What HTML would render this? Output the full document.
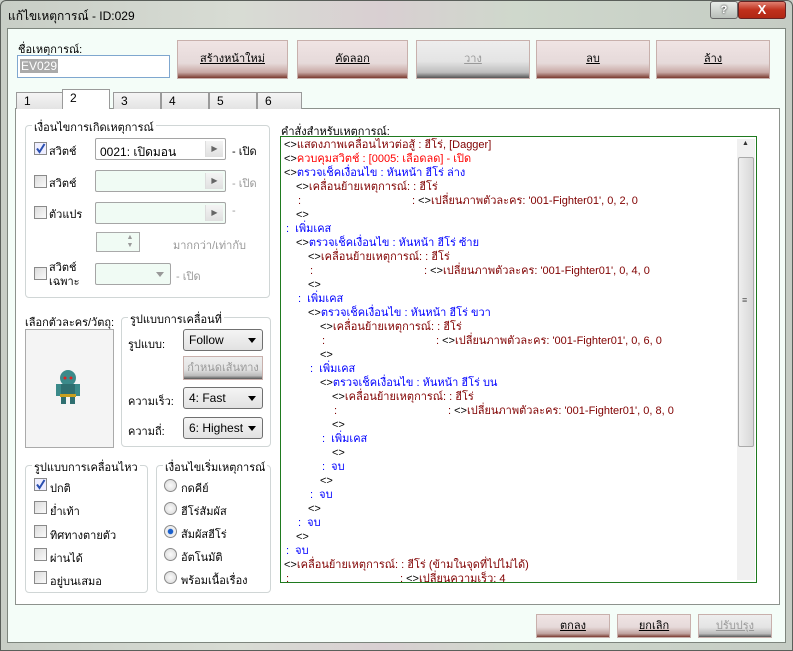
<!DOCTYPE html>
<html><head><meta charset="utf-8"><style>
*{box-sizing:border-box;margin:0;padding:0}
body{width:793px;height:651px;overflow:hidden;background:#c9cfc8;font-family:"Liberation Sans","DejaVu Sans",sans-serif;font-size:11px;color:#000;position:relative}
.a{position:absolute;white-space:nowrap}
.frame{position:absolute;left:0;top:0;width:793px;height:651px;background:linear-gradient(90deg,#c8cec6,#d8dcd4 30%,#d9cfd2 48%,#cfd8cc 65%,#c5ccc4);border:1px solid #5a5f5a;border-radius:6px 6px 0 0}
.client{position:absolute;left:7px;top:28px;width:779px;height:615px;background:#f4fdf8;border:1px solid #7d857d}
.btn{position:absolute;height:39px;background:linear-gradient(#f0e4e4 0%,#e8dcdc 45%,#e6dada 60%,#c8a8a4 85%,#7a3a30 100%);border:1px solid #c8b0ac;text-align:center;line-height:36px;font-size:11px;text-decoration:underline}
.btn.dis{background:linear-gradient(#eee 0%,#e4e4e4 55%,#bdbdbd 85%,#555 100%);color:#999}
.sbtn{position:absolute;height:24px;background:linear-gradient(#f0e4e4,#e6dada 55%,#bfa29e 85%,#7a3a30);border:1px solid #c8b0ac;text-align:center;line-height:22px;text-decoration:underline}
.sbtn.dis{background:linear-gradient(#eee,#e4e4e4 55%,#bbb 85%,#555);color:#999}
.tab{position:absolute;top:92px;height:17px;width:48px;background:linear-gradient(#f5f5f5,#e3e3e3);border:1px solid #9a9a9a;border-bottom:none;padding-left:7px;line-height:16px;font-size:12px}
.panel{position:absolute;left:15px;top:108px;width:765px;height:497px;background:#fff;border:1px solid #8d928d}
.grp{position:absolute;border:1px solid #d0d6d6;border-radius:4px}
.gl{position:absolute;background:#fff;padding:0 2px;top:-8px;left:6px}
.cb{position:absolute;width:13px;height:13px;border:1px solid #8a8a8a;background:linear-gradient(135deg,#dcdcdc,#fafafa)}
.rb{position:absolute;width:13px;height:13px;border:1px solid #8a8a8a;border-radius:50%;background:radial-gradient(#fafafa,#d8d8d8)}
.combo{position:absolute;height:22px;border:1px solid #a5a5a5;border-radius:2px;background:#f0fbf4}
.combo.on{background:#fff}
.arr{position:absolute;right:2px;top:2px;width:18px;height:16px;background:linear-gradient(#f4f4f4,#e0e0e0);border-left:1px solid #ddd;font-size:8px;text-align:center;line-height:16px;color:#666}
.dd{position:absolute;height:22px;border:1px solid #707070;border-radius:3px;background:linear-gradient(#f4f4f4,#e2e2e2);padding-left:5px;line-height:20px;font-size:12px}
.dd:after{content:"";position:absolute;right:6px;top:8px;border:4px solid transparent;border-top:5px solid #000}
.list{position:absolute;left:280px;top:136px;width:477px;height:447px;border:1px solid #1f7a1f;background:#fff;overflow:hidden}
.l{position:absolute;white-space:nowrap;font-size:11px;line-height:14px}
.r{color:#800000}.rr{color:#f00}.b{color:#00f}.k{color:#000}
.gray{color:#999}
.chk{position:absolute;width:13px;height:13px}
</style></head><body>
<div class="frame"></div>
<div class="a" style="left:8px;top:7px;font-size:12px">แก้ไขเหตุการณ์ - ID:029</div>
<div class="a" style="left:710px;top:1px;width:28px;height:18px;background:linear-gradient(#e8ece8,#b8beb8);border:1px solid #666;border-radius:3px;text-align:center;font-weight:bold;color:#fff;text-shadow:0 0 2px #000;line-height:16px">?</div>
<div class="a" style="left:738px;top:1px;width:48px;height:18px;background:linear-gradient(#e08070,#c0301c 50%,#b02814);border:1px solid #622;border-radius:3px;text-align:center;font-weight:bold;color:#fff;line-height:16px;font-size:13px">X</div>
<div class="client"></div>
<div class="a" style="left:18px;top:40px">ชื่อเหตุการณ์:</div>
<div class="a" style="left:17px;top:55px;width:153px;height:23px;border:1px solid #7fa7cf;background:#fff"><span style="position:absolute;left:2px;top:3px;background:#aaa;color:#fff;font-size:12px;padding:0 1px">EV029</span></div>
<div class="btn" style="left:177px;top:40px;width:111px">สร้างหน้าใหม่</div>
<div class="btn" style="left:297px;top:40px;width:111px">คัดลอก</div>
<div class="btn dis" style="left:416px;top:40px;width:114px">วาง</div>
<div class="btn" style="left:536px;top:40px;width:114px">ลบ</div>
<div class="btn" style="left:656px;top:40px;width:114px">ล้าง</div>
<div class="panel"></div>
<div class="tab" style="left:16px">1</div>
<div class="tab" style="left:62px;top:89px;height:20px;background:#fff;z-index:2">2</div>
<div class="tab" style="left:113px">3</div>
<div class="tab" style="left:161px">4</div>
<div class="tab" style="left:209px">5</div>
<div class="tab" style="left:257px;width:45px">6</div>

<div class="grp" style="left:25px;top:125px;width:245px;height:173px"><span class="gl">เงื่อนไขการเกิดเหตุการณ์</span></div>
<div class="cb" style="left:34px;top:142px;background:#eef"></div><svg class="chk" style="left:34px;top:142px" viewBox="0 0 13 13"><path d="M3 6.5 L5.5 10 L10.5 2" stroke="#2a4fb0" stroke-width="2" fill="none"/></svg>
<div class="a" style="left:49px;top:142px">สวิตช์</div>
<div class="combo on" style="left:95px;top:138px;width:131px"><span class="a" style="left:4px;top:4px;font-size:12px">0021: เปิดมอน</span><div class="arr">▶</div></div>
<div class="a" style="left:232px;top:142px">- เปิด</div>
<div class="cb" style="left:34px;top:175px"></div><div class="a" style="left:49px;top:174px">สวิตช์</div>
<div class="combo" style="left:95px;top:170px;width:131px"><div class="arr">▶</div></div><div class="a gray" style="left:232px;top:174px">- เปิด</div>
<div class="cb" style="left:34px;top:206px"></div><div class="a" style="left:49px;top:205px">ตัวแปร</div>
<div class="combo" style="left:95px;top:202px;width:131px"><div class="arr">▶</div></div><div class="a gray" style="left:232px;top:205px">-</div>
<div class="a" style="left:96px;top:232px;width:44px;height:20px;border:1px solid #aaa;background:#f0fbf4"></div>
<div class="a" style="left:122px;top:234px;width:16px;height:16px;font-size:7px;color:#999;text-align:center;line-height:8px">▲<br>▼</div>
<div class="a gray" style="left:173px;top:236px">มากกว่า/เท่ากับ</div>
<div class="cb" style="left:34px;top:267px"></div><div class="a" style="left:49px;top:261px;line-height:14px">สวิตช์<br>เฉพาะ</div>
<div class="combo" style="left:95px;top:263px;width:76px"><div class="a" style="right:6px;top:8px;border:4px solid transparent;border-top:5px solid #999"></div></div>
<div class="a gray" style="left:176px;top:267px">- เปิด</div>

<div class="a" style="left:25px;top:313px">เลือกตัวละคร/วัตถุ:</div>
<div class="a" style="left:25px;top:329px;width:89px;height:119px;border:1px solid #aaa;background:#f4f4f4"></div>
<svg class="a" style="left:54px;top:368px" width="28" height="38" viewBox="0 0 28 38"><ellipse cx="14" cy="10" rx="8" ry="8" fill="#3b8a8a"/><rect x="6" y="16" width="16" height="12" fill="#2f6f70"/><circle cx="11" cy="10" r="1.5" fill="#d22"/><circle cx="17" cy="10" r="1.5" fill="#d22"/><rect x="2" y="16" width="5" height="12" fill="#3b8a8a"/><rect x="21" y="16" width="5" height="12" fill="#3b8a8a"/><rect x="7" y="28" width="5" height="8" fill="#2f6f70"/><rect x="16" y="28" width="5" height="8" fill="#2f6f70"/><rect x="6" y="26" width="16" height="3" fill="#c9a020"/></svg>

<div class="grp" style="left:121px;top:317px;width:150px;height:130px"><span class="gl">รูปแบบการเคลื่อนที่</span></div>
<div class="a" style="left:128px;top:335px">รูปแบบ:</div><div class="dd" style="left:183px;top:329px;width:80px">Follow</div>
<div class="sbtn dis" style="left:183px;top:356px;width:80px;text-decoration:none">กำหนดเส้นทาง</div>
<div class="a" style="left:128px;top:392px">ความเร็ว:</div><div class="dd" style="left:183px;top:387px;width:80px">4: Fast</div>
<div class="a" style="left:128px;top:422px">ความถี่:</div><div class="dd" style="left:183px;top:417px;width:80px">6: Highest</div>

<div class="grp" style="left:25px;top:465px;width:123px;height:128px"><span class="gl">รูปแบบการเคลื่อนไหว</span></div>
<div class="cb" style="left:34px;top:478px;background:#eef"></div><svg class="chk" style="left:34px;top:478px" viewBox="0 0 13 13"><path d="M3 6.5 L5.5 10 L10.5 2" stroke="#2a4fb0" stroke-width="2" fill="none"/></svg>
<div class="a" style="left:50px;top:479px">ปกติ</div>
<div class="cb" style="left:34px;top:501px"></div><div class="a" style="left:50px;top:502px">ย่ำเท้า</div>
<div class="cb" style="left:34px;top:525px"></div><div class="a" style="left:50px;top:526px">ทิศทางตายตัว</div>
<div class="cb" style="left:34px;top:548px"></div><div class="a" style="left:50px;top:549px">ผ่านได้</div>
<div class="cb" style="left:34px;top:571px"></div><div class="a" style="left:50px;top:572px">อยู่บนเสมอ</div>

<div class="grp" style="left:156px;top:465px;width:115px;height:128px"><span class="gl">เงื่อนไขเริ่มเหตุการณ์</span></div>
<div class="rb" style="left:164px;top:479px"></div><div class="a" style="left:181px;top:479px">กดคีย์</div>
<div class="rb" style="left:164px;top:502px"></div><div class="a" style="left:181px;top:502px">ฮีโร่สัมผัส</div>
<div class="rb" style="left:164px;top:525px;background:radial-gradient(#1a5fcc 30%,#eee 40%)"></div><div class="a" style="left:181px;top:525px">สัมผัสฮีโร่</div>
<div class="rb" style="left:164px;top:548px"></div><div class="a" style="left:181px;top:548px">อัตโนมัติ</div>
<div class="rb" style="left:164px;top:571px"></div><div class="a" style="left:181px;top:571px">พร้อมเนื้อเรื่อง</div>

<div class="a" style="left:281px;top:122px">คำสั่งสำหรับเหตุการณ์:</div>
<div class="list">
<div class="a" style="left:456px;top:2px;width:18px;height:441px;background:#f0f0f0"></div>
<div class="a" style="left:457px;top:20px;width:16px;height:290px;background:linear-gradient(90deg,#eee,#d8d8d8);border:1px solid #aaa;border-radius:2px"></div>
<div class="a" style="left:461px;top:3px;font-size:7px;color:#333">▲</div>
<div class="a" style="left:461px;top:158px;font-size:9px;color:#555">≡</div>
<div class="l" style="left:3px;top:1px"><span class="k">&lt;&gt;</span><span class="r">แสดงภาพเคลื่อนไหวต่อสู้ : ฮีโร่, [Dagger]</span></div>
<div class="l" style="left:3px;top:15px"><span class="k">&lt;&gt;</span><span class="rr">ควบคุมสวิตช์ : [0005: เลือดลด] - เปิด</span></div>
<div class="l b" style="left:3px;top:29px"><span class="k">&lt;&gt;</span>ตรวจเช็คเงื่อนไข : หันหน้า ฮีโร่ ล่าง</div>
<div class="l r" style="left:15px;top:43px"><span class="k">&lt;&gt;</span>เคลื่อนย้ายเหตุการณ์: : ฮีโร่</div>
<div class="l r" style="left:17px;top:57px">:<span style="position:absolute;left:114px">: <span class="k">&lt;&gt;</span>เปลี่ยนภาพตัวละคร: '001-Fighter01', 0, 2, 0</span></div>
<div class="l" style="left:15px;top:71px">&lt;&gt;</div>
<div class="l b" style="left:5px;top:85px">:&nbsp; เพิ่มเคส</div>
<div class="l b" style="left:15px;top:99px"><span class="k">&lt;&gt;</span>ตรวจเช็คเงื่อนไข : หันหน้า ฮีโร่ ซ้าย</div>
<div class="l r" style="left:27px;top:113px"><span class="k">&lt;&gt;</span>เคลื่อนย้ายเหตุการณ์: : ฮีโร่</div>
<div class="l r" style="left:29px;top:127px">:<span style="position:absolute;left:114px">: <span class="k">&lt;&gt;</span>เปลี่ยนภาพตัวละคร: '001-Fighter01', 0, 4, 0</span></div>
<div class="l" style="left:27px;top:141px">&lt;&gt;</div>
<div class="l b" style="left:17px;top:155px">:&nbsp; เพิ่มเคส</div>
<div class="l b" style="left:27px;top:169px"><span class="k">&lt;&gt;</span>ตรวจเช็คเงื่อนไข : หันหน้า ฮีโร่ ขวา</div>
<div class="l r" style="left:39px;top:183px"><span class="k">&lt;&gt;</span>เคลื่อนย้ายเหตุการณ์: : ฮีโร่</div>
<div class="l r" style="left:41px;top:197px">:<span style="position:absolute;left:114px">: <span class="k">&lt;&gt;</span>เปลี่ยนภาพตัวละคร: '001-Fighter01', 0, 6, 0</span></div>
<div class="l" style="left:39px;top:211px">&lt;&gt;</div>
<div class="l b" style="left:29px;top:225px">:&nbsp; เพิ่มเคส</div>
<div class="l b" style="left:39px;top:239px"><span class="k">&lt;&gt;</span>ตรวจเช็คเงื่อนไข : หันหน้า ฮีโร่ บน</div>
<div class="l r" style="left:51px;top:253px"><span class="k">&lt;&gt;</span>เคลื่อนย้ายเหตุการณ์: : ฮีโร่</div>
<div class="l r" style="left:53px;top:267px">:<span style="position:absolute;left:114px">: <span class="k">&lt;&gt;</span>เปลี่ยนภาพตัวละคร: '001-Fighter01', 0, 8, 0</span></div>
<div class="l" style="left:51px;top:281px">&lt;&gt;</div>
<div class="l b" style="left:41px;top:295px">:&nbsp; เพิ่มเคส</div>
<div class="l" style="left:51px;top:309px">&lt;&gt;</div>
<div class="l b" style="left:41px;top:323px">:&nbsp; จบ</div>
<div class="l" style="left:39px;top:337px">&lt;&gt;</div>
<div class="l b" style="left:29px;top:351px">:&nbsp; จบ</div>
<div class="l" style="left:27px;top:365px">&lt;&gt;</div>
<div class="l b" style="left:17px;top:379px">:&nbsp; จบ</div>
<div class="l" style="left:15px;top:393px">&lt;&gt;</div>
<div class="l b" style="left:5px;top:407px">:&nbsp; จบ</div>
<div class="l r" style="left:3px;top:421px"><span class="k">&lt;&gt;</span>เคลื่อนย้ายเหตุการณ์: : ฮีโร่ (ข้ามในจุดที่ไปไม่ได้)</div>
<div class="l r" style="left:5px;top:435px">:<span style="position:absolute;left:114px">: <span class="k">&lt;&gt;</span>เปลี่ยนความเร็ว: 4</span></div>
</div>

<div class="sbtn" style="left:536px;top:614px;width:74px">ตกลง</div>
<div class="sbtn" style="left:617px;top:614px;width:74px">ยกเลิก</div>
<div class="sbtn dis" style="left:698px;top:614px;width:74px">ปรับปรุง</div>
</body></html>
